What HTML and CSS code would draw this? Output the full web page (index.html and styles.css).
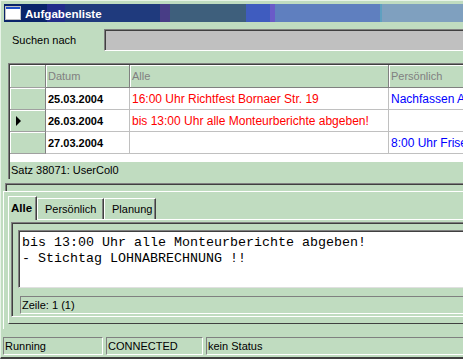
FILE: index.html
```html
<!DOCTYPE html>
<html lang="de">

<head>
    <meta charset="UTF-8">
    <title>Aufgabenliste</title>
    <link rel="stylesheet" href="styles.css">
</head>

<body>

    <div class="window">

        <div class="titlebar">
            <svg class="title-icon" width="16" height="16" viewBox="0 0 16 16">
                <rect x="0.5" y="1.5" width="15" height="13" fill="#ffffff" stroke="#c0c0c0" />
                <rect x="1" y="2" width="14" height="2" fill="#2050c8" />
            </svg>
            <span>Aufgabenliste</span>
        </div>

        <div class="search">
            <label>Suchen nach</label>
            <div class="search-input"></div>
        </div>

        <!-- Aufgaben-Grid -->
        <div class="grid">
            <table class="grid-table">
                <tr class="head">
                    <td class="ind"></td>
                    <td class="c-date">Datum</td>
                    <td class="c-all">Alle</td>
                    <td class="c-pers">Persönlich</td>
                </tr>
                <tr>
                    <td class="ind"></td>
                    <td class="c-date">25.03.2004</td>
                    <td class="c-all red">16:00 Uhr Richtfest Bornaer Str. 19</td>
                    <td class="c-pers blue">Nachfassen Angebot Meier</td>
                </tr>
                <tr>
                    <td class="ind"><span class="arrow"></span></td>
                    <td class="c-date">26.03.2004</td>
                    <td class="c-all red">bis 13:00 Uhr alle Monteurberichte abgeben!</td>
                    <td class="c-pers blue"></td>
                </tr>
                <tr>
                    <td class="ind"></td>
                    <td class="c-date">27.03.2004</td>
                    <td class="c-all red"></td>
                    <td class="c-pers blue">8:00 Uhr Friseur</td>
                </tr>
            </table>
            <div class="grid-empty"></div>
            <div class="grid-status">Satz 38071: UserCol0</div>
        </div>

        <div class="splitter"></div>

        <!-- Detailbereich -->
        <div class="lower">
            <div class="tabs">
                <div class="tab active">Alle</div>
                <div class="tab">Persönlich</div>
                <div class="tab">Planung</div>
            </div>
            <div class="sheet">
                <div class="panel">
                    <div class="memo">bis 13:00 Uhr alle Monteurberichte abgeben!
- Stichtag LOHNABRECHNUNG !!</div>
                    <div class="memo-status">Zeile: 1 (1)</div>
                </div>
            </div>
        </div>

        <div class="statusbar">
            <div class="status-panel running">Running</div>
            <div class="status-panel connected">CONNECTED</div>
            <div class="status-panel rest">kein Status</div>
        </div>

    </div>

</body>

</html>
```

FILE: styles.css
```css
* {
    margin: 0;
    padding: 0;
    box-sizing: border-box;
}

body {
    width: 463px;
    height: 359px;
    overflow: hidden;
    background-color: #c0dcc0;
    font-family: "Liberation Sans", Arial, sans-serif;
    font-size: 11px;
    color: #000;
}

.window {
    width: 500px;
    height: 359px;
    padding-top: 3px;
    padding-left: 3px;
    border-top: 1px solid #e8f4e8;
    border-left: 1px solid #e8f4e8;
    border-bottom: 2px solid #404040;
    display: flex;
    flex-direction: column;
}

.window > * {
    flex: none;
}

.titlebar {
    height: 18px;
    display: flex;
    align-items: center;
    gap: 4px;
    padding-left: 1px;
    color: #fff;
    font-weight: bold;
    font-size: 11.6px;
    background: linear-gradient(to right,
        #0a246a 0px, #0a246a 43px,
        #222c8a 43px, #222c8a 61px,
        #1f3a7d 61px, #1f3a7d 156px,
        #483d86 156px, #483d86 166px,
        #3e5f7c 166px, #3e5f7c 242px,
        #3f5cbf 242px, #3f5cbf 266px,
        #6a5ac8 266px, #6a5ac8 271px,
        #5f7fbf 271px, #5f7fbf 376px,
        #5fa0c0 376px, #5fa0c0 378px,
        #7fa0bf 378px);
}

.title-icon {
    flex: none;
}

.search {
    display: flex;
    align-items: center;
    height: 22px;
    margin-top: 7px;
}

.search label {
    width: 100px;
    padding-left: 8px;
    font-size: 11px;
}

.search-input {
    flex: 1;
    height: 22px;
    background: #c0c0c0;
    border-top: 1px solid #808080;
    border-left: 1px solid #808080;
    border-bottom: 1px solid #fff;
    box-shadow: inset 1px 1px 0 #404040;
}

/* grid */

.grid {
    margin-top: 12px;
    margin-left: 4px;
    height: 116px;
    border-top: 1px solid #808080;
    border-left: 1px solid #808080;
    box-shadow: inset 1px 1px 0 #404040;
    padding: 1px 0 0 1px;
    display: flex;
    flex-direction: column;
    background: #fff;
}

.grid > * {
    flex: none;
}

.grid-table {
    border-collapse: separate;
    border-spacing: 0;
    table-layout: fixed;
    width: 500px;
}

.grid-table td {
    height: 22px;
    border-right: 1px solid #c0c0c0;
    border-bottom: 1px solid #c0c0c0;
    padding: 0 2px;
    white-space: nowrap;
    overflow: hidden;
    font-size: 12px;
}

.grid-table .head td {
    height: 23px;
    background: #c0dcc0;
    color: #808080;
    font-size: 11px;
    border-right: 1px solid #808080;
    border-bottom: 1px solid #808080;
    box-shadow: inset 1px 1px 0 #fff;
}

.grid-table td.ind {
    width: 36px;
    background: #c0dcc0;
    border-right: 1px solid #808080;
    border-bottom: 1px solid #a0a0a0;
    box-shadow: inset 1px 1px 0 #fff;
    padding: 0 0 0 6px;
}

.grid-table td.c-date {
    width: 84px;
    font-weight: bold;
    font-size: 11px;
}

.grid-table .head td.c-date {
    font-weight: normal;
}

.grid-table td.c-all {
    width: 259px;
}

.red {
    color: #ff0000;
}

.blue {
    color: #0000ff;
}

.arrow {
    display: block;
    width: 0;
    height: 0;
    border-top: 5px solid transparent;
    border-bottom: 5px solid transparent;
    border-left: 5px solid #000;
}

.grid-empty {
    height: 8px;
}

.grid-status {
    height: 17px;
    background: #c0dcc0;
    padding-left: 1px;
    line-height: 16px;
}

.splitter {
    height: 8px;
    margin-top: 4px;
    margin-left: 1px;
    border-top: 1px solid #808080;
    border-left: 1px solid #808080;
    box-shadow: inset 1px 1px 0 #404040;
}

/* tabs */

.lower {
    height: 138px;
    margin-left: -1px;
    border-top: 1px solid #fff;
    border-left: 1px solid #fff;
    padding: 4px 0 0 4px;
    display: flex;
    flex-direction: column;
}

.lower > * {
    flex: none;
}

.tabs {
    display: flex;
    align-items: flex-end;
    height: 23px;
    position: relative;
    z-index: 1;
}

.tab {
    height: 21px;
    line-height: 20px;
    padding: 0 7px;
    border-top: 1px solid #fff;
    border-left: 1px solid #fff;
    border-right: 1px solid #404040;
    box-shadow: inset -1px 0 0 #808080;
    background: #c0dcc0;
}

.tab:nth-child(2) {
    width: 67px;
}

.tab:nth-child(3) {
    width: 52px;
}

.tab.active {
    width: 29px;
    height: 24px;
    margin-bottom: -1px;
    padding: 0 2px;
    font-weight: bold;
    line-height: 22px;
    font-size: 11.5px;
}

.sheet {
    height: 105px;
    border-top: 1px solid #fff;
    border-left: 1px solid #fff;
    border-bottom: 1px solid #404040;
    padding: 2px 0 0 2px;
}

.panel {
    height: 95px;
    border-top: 1px solid #808080;
    border-left: 1px solid #808080;
    border-bottom: 1px solid #fff;
    box-shadow: inset 1px 1px 0 #404040;
    padding: 7px 0 0 6px;
    display: flex;
    flex-direction: column;
}

.panel > * {
    flex: none;
}

.memo {
    height: 58px;
    background: #fff;
    border-top: 1px solid #808080;
    border-left: 1px solid #808080;
    border-bottom: 1px solid #e0e0e0;
    box-shadow: inset 1px 1px 0 #404040;
    padding: 4px 0 0 3px;
    font-family: "Liberation Mono", "Courier New", monospace;
    font-size: 13.33px;
    line-height: 16px;
    white-space: pre;
}

.memo-status {
    height: 18px;
    margin-top: 8px;
    margin-left: 2px;
    border-top: 1px solid #808080;
    border-left: 1px solid #808080;
    border-bottom: 1px solid #fff;
    padding-left: 1px;
    line-height: 17px;
}

/* statusbar */

.statusbar {
    display: flex;
    gap: 3px;
    height: 18px;
    margin-top: 8px;
    margin-left: -1px;
}

.status-panel {
    border-top: 1px solid #808080;
    border-left: 1px solid #808080;
    border-bottom: 1px solid #fff;
    border-right: 1px solid #fff;
    padding-left: 1px;
    line-height: 16px;
}

.running {
    width: 100px;
}

.connected {
    width: 97px;
}

.rest {
    flex: 1;
}
```
